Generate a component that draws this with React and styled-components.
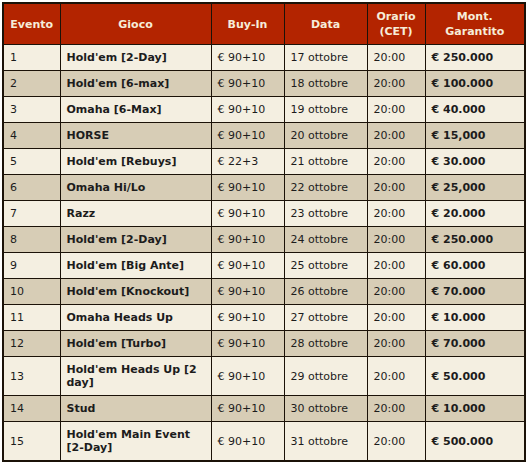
import React from 'react';
import styled, { createGlobalStyle } from 'styled-components';

const GlobalStyle = createGlobalStyle`
  body {
    margin: 0;
    padding: 2px 0 0 2px;
    background: #ffffff;
    font-family: "DejaVu Sans", Verdana, sans-serif;
  }
`;

const Table = styled.table`
  border-collapse: collapse;
  table-layout: fixed;
  width: 524px;
  border: 2px solid #1b1208;
  font-size: 11px;
`;

const HeadCell = styled.th`
  background: #b32400;
  color: #f6ecd9;
  font-weight: bold;
  text-align: center;
  line-height: 15px;
  padding: 5px 4px;
  border: 1px solid #1b1208;
`;

const Row = styled.tr`
  background: ${({ dark }) => (dark ? '#d7cdb6' : '#f4efe1')};
`;

const Cell = styled.td`
  color: #1c1c1c;
  font-weight: ${({ bold }) => (bold ? 'bold' : 'normal')};
  line-height: 13px;
  padding: 6px 6px;
  border: 1px solid #1b1208;
  text-align: left;
`;

const widths = [57, 151, 73, 83, 58, 100];

const rows = [
  ['1', "Hold'em [2-Day]", '€ 90+10', '17 ottobre', '€ 250.000'],
  ['2', "Hold'em [6-max]", '€ 90+10', '18 ottobre', '€ 100.000'],
  ['3', 'Omaha [6-Max]', '€ 90+10', '19 ottobre', '€ 40.000'],
  ['4', 'HORSE', '€ 90+10', '20 ottobre', '€ 15,000'],
  ['5', "Hold'em [Rebuys]", '€ 22+3', '21 ottobre', '€ 30.000'],
  ['6', 'Omaha Hi/Lo', '€ 90+10', '22 ottobre', '€ 25,000'],
  ['7', 'Razz', '€ 90+10', '23 ottobre', '€ 20.000'],
  ['8', "Hold'em [2-Day]", '€ 90+10', '24 ottobre', '€ 250.000'],
  ['9', "Hold'em [Big Ante]", '€ 90+10', '25 ottobre', '€ 60.000'],
  ['10', "Hold'em [Knockout]", '€ 90+10', '26 ottobre', '€ 70.000'],
  ['11', 'Omaha Heads Up', '€ 90+10', '27 ottobre', '€ 10.000'],
  ['12', "Hold'em [Turbo]", '€ 90+10', '28 ottobre', '€ 70.000'],
  ['13', "Hold'em Heads Up [2 day]", '€ 90+10', '29 ottobre', '€ 50.000'],
  ['14', 'Stud', '€ 90+10', '30 ottobre', '€ 10.000'],
  ['15', "Hold'em Main Event [2-Day]", '€ 90+10', '31 ottobre', '€ 500.000'],
];

export default function App() {
  return (
    <>
      <GlobalStyle />
      <Table>
        <colgroup>
          {widths.map((w, i) => (
            <col key={i} style={{ width: w }} />
          ))}
        </colgroup>
        <thead>
          <tr>
            <HeadCell>Evento</HeadCell>
            <HeadCell>Gioco</HeadCell>
            <HeadCell>Buy-In</HeadCell>
            <HeadCell>Data</HeadCell>
            <HeadCell>Orario<br />(CET)</HeadCell>
            <HeadCell>Mont.<br />Garantito</HeadCell>
          </tr>
        </thead>
        <tbody>
          {rows.map(([n, game, buy, date, prize], i) => (
            <Row key={n} dark={i % 2 === 1}>
              <Cell>{n}</Cell>
              <Cell bold>{game}</Cell>
              <Cell>{buy}</Cell>
              <Cell>{date}</Cell>
              <Cell>20:00</Cell>
              <Cell bold>{prize}</Cell>
            </Row>
          ))}
        </tbody>
      </Table>
    </>
  );
}
